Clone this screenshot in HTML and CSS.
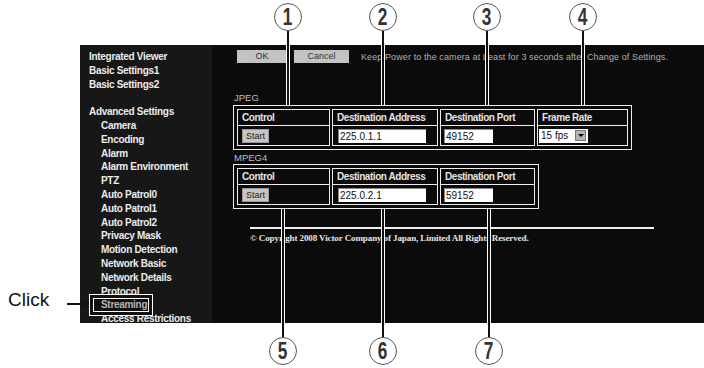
FILE: index.html
```html
<!DOCTYPE html>
<html lang="en">
<head>
    <meta charset="UTF-8">
    <meta name="viewport" content="width=device-width, initial-scale=1.0">
    <link rel="stylesheet" href="styles.css">
</head>
<body>

<div class="page">

    <div class="screen">
        <nav class="menu">
            <ul>
                <li>Integrated Viewer</li>
                <li>Basic Settings1</li>
                <li>Basic Settings2</li>
                <li class="blank"></li>
                <li>Advanced Settings</li>
                <li class="sub">Camera</li>
                <li class="sub">Encoding</li>
                <li class="sub">Alarm</li>
                <li class="sub">Alarm Environment</li>
                <li class="sub">PTZ</li>
                <li class="sub">Auto Patrol0</li>
                <li class="sub">Auto Patrol1</li>
                <li class="sub">Auto Patrol2</li>
                <li class="sub">Privacy Mask</li>
                <li class="sub">Motion Detection</li>
                <li class="sub">Network Basic</li>
                <li class="sub">Network Details</li>
                <li class="sub">Protocol</li>
                <li class="sub current"><span>Streaming</span></li>
                <li class="sub">Access Restrictions</li>
            </ul>
        </nav>

        <main class="content">
            <div class="actions">
                <button class="btn btn-ok">OK</button>
                <button class="btn btn-cancel">Cancel</button>
                <span class="note">Keep Power to the camera at Least for 3 seconds after Change of Settings.</span>
            </div>

            <div class="label">JPEG</div>
            <div class="frame">
                <div class="col col-control">
                    <div class="head">Control</div>
                    <div class="cell"><button class="start">Start</button></div>
                </div>
                <div class="col col-address">
                    <div class="head">Destination Address</div>
                    <div class="cell"><div class="field field-address">225.0.1.1</div></div>
                </div>
                <div class="col col-port">
                    <div class="head">Destination Port</div>
                    <div class="cell"><div class="field field-port">49152</div></div>
                </div>
                <div class="col col-rate">
                    <div class="head">Frame Rate</div>
                    <div class="cell">
                        <div class="select">15 fps<span class="arrow"></span></div>
                    </div>
                </div>
            </div>

            <div class="label label-mpeg">MPEG4</div>
            <div class="frame frame-mpeg">
                <div class="col col-control">
                    <div class="head">Control</div>
                    <div class="cell"><button class="start">Start</button></div>
                </div>
                <div class="col col-address">
                    <div class="head">Destination Address</div>
                    <div class="cell"><div class="field field-address">225.0.2.1</div></div>
                </div>
                <div class="col col-port">
                    <div class="head">Destination Port</div>
                    <div class="cell"><div class="field field-port">59152</div></div>
                </div>
            </div>

            <div class="rule"></div>
            <p class="copy">&copy; Copyright 2008 Victor Company of Japan, Limited All Rights Reserved.</p>
        </main>
    </div>

    <!-- annotations drawn over the screenshot -->
    <div class="click-label">Click</div>
    <div class="click-line"></div>

    <div class="callout-line" style="left: 286px; top: 31px; height: 74px;"></div>
    <div class="callout-line" style="left: 381px; top: 31px; height: 74px;"></div>
    <div class="callout-line" style="left: 485px; top: 31px; height: 74px;"></div>
    <div class="callout-line" style="left: 581px; top: 31px; height: 74px;"></div>
    <div class="callout-line" style="left: 281px; top: 209px; height: 128px;"></div>
    <div class="callout-line" style="left: 381px; top: 209px; height: 128px;"></div>
    <div class="callout-line" style="left: 487px; top: 209px; height: 128px;"></div>

    <div class="badge" style="left: 274px; top: 3px;"><span>1</span></div>
    <div class="badge" style="left: 369px; top: 3px;"><span>2</span></div>
    <div class="badge" style="left: 473px; top: 3px;"><span>3</span></div>
    <div class="badge" style="left: 569px; top: 3px;"><span>4</span></div>
    <div class="badge" style="left: 269px; top: 337px;"><span>5</span></div>
    <div class="badge" style="left: 369px; top: 337px;"><span>6</span></div>
    <div class="badge" style="left: 475px; top: 337px;"><span>7</span></div>

</div>

</body>
</html>
```

FILE: styles.css
```css
body {
    margin: 0;
    background-color: #fff;
    font-family: 'Liberation Sans', Arial, sans-serif;
}

.page {
    position: relative;
    width: 704px;
    height: 368px;
    overflow: hidden;
}

.screen {
    display: flex;
    margin: 45px 0 0 80px;
    height: 278px;
    background-color: #0b0b0b;
}

/* left menu */
.menu {
    width: 132px;
    flex: none;
    background-color: #171717;
    overflow: hidden;
}

.menu ul {
    list-style: none;
    margin: 0;
    padding: 5px 0 0 9px;
}

.menu li {
    height: 13.8px;
    line-height: 13.8px;
    font-size: 10px;
    font-weight: bold;
    letter-spacing: -0.3px;
    color: #ececec;
    white-space: nowrap;
}

.menu li.sub {
    padding-left: 12px;
}

.menu li.current {
    position: relative;
    z-index: 1;
}

.menu li.current span {
    position: relative;
    color: #b4b4b4;
}

.menu li.current::before {
    content: "";
    position: absolute;
    left: 4px;
    top: 0;
    width: 54px;
    height: 12px;
    background-color: #111;
    border: 1px solid #fff;
    box-shadow: 0 0 0 3px #111, 0 0 0 4px #fff;
}

/* main area */
.content {
    flex: 1;
    padding: 5px 0 0 21px;
}

.actions {
    display: flex;
    align-items: center;
    height: 13px;
    margin-left: 4px;
}

.btn {
    height: 13px;
    margin: 0 7px 0 0;
    padding: 0;
    border: none;
    background-color: #c3c3c3;
    color: #333;
    font-family: 'Liberation Sans', Arial, sans-serif;
    font-size: 9px;
    line-height: 13px;
}

.btn-ok {
    width: 50px;
}

.btn-cancel {
    width: 55px;
    margin-right: 12px;
}

.note {
    font-size: 9px;
    color: #b0b0b0;
    white-space: nowrap;
    letter-spacing: 0.1px;
}

.label {
    height: 11px;
    line-height: 11px;
    margin: 29px 0 2px 1px;
    font-size: 9.5px;
    color: #bdbdbd;
}

.label-mpeg {
    margin-top: 2px;
    margin-bottom: 1px;
}

.frame {
    display: inline-flex;
    gap: 2px;
    padding: 3px;
    border: 1px solid #eee;
}

.frame-mpeg {
    display: flex;
    width: max-content;
}

.col {
    border: 1px solid #eee;
}

.col-control { width: 91px; }
.col-address { width: 104px; }
.col-port { width: 93px; }
.col-rate { width: 89px; }

.head {
    height: 15px;
    line-height: 15px;
    padding-left: 4px;
    border-bottom: 1px solid #eee;
    font-size: 10px;
    font-weight: bold;
    letter-spacing: -0.45px;
    color: #e4e4e4;
    white-space: nowrap;
}

.cell {
    display: flex;
    align-items: center;
    height: 19px;
    padding-left: 4px;
}

.start {
    width: 27px;
    height: 14px;
    padding: 0;
    border: 1px solid #9a9a9a;
    background-color: #c6c6c6;
    color: #222;
    font-family: 'Liberation Sans', Arial, sans-serif;
    font-size: 9px;
    line-height: 12px;
}

.field {
    height: 14px;
    box-sizing: border-box;
    padding-left: 1px;
    background-color: #fff;
    border-top: 1px solid #888;
    border-left: 1px solid #888;
    color: #111;
    font-size: 10px;
    line-height: 13px;
}

.field-address {
    width: 88px;
    margin-left: 1px;
}

.field-port {
    width: 49px;
    margin-left: -1px;
}

.select {
    position: relative;
    width: 49px;
    height: 14px;
    margin-left: -3px;
    box-sizing: border-box;
    padding-left: 2px;
    background-color: #fff;
    color: #111;
    font-size: 10px;
    line-height: 14px;
}

.arrow {
    position: absolute;
    right: 2px;
    top: 1px;
    width: 11px;
    height: 11px;
    background-color: #b4b4b4;
    border: 1px solid #777;
    box-sizing: border-box;
}

.arrow::after {
    content: "";
    position: absolute;
    left: 2px;
    top: 3px;
    border-left: 3px solid transparent;
    border-right: 3px solid transparent;
    border-top: 3px solid #000;
}

.rule {
    width: 404px;
    height: 2px;
    margin: 18px 0 0 17px;
    background-color: #eee;
}

.copy {
    margin: 4px 0 0 17px;
    font-family: 'Liberation Serif', 'Times New Roman', serif;
    font-size: 9px;
    font-weight: bold;
    letter-spacing: -0.1px;
    line-height: 10px;
    color: #e6e6e6;
    white-space: nowrap;
}

/* annotations */
.click-label {
    position: absolute;
    left: 8px;
    top: 289px;
    font-size: 19px;
    line-height: 22px;
    color: #111;
}

.click-line {
    position: absolute;
    left: 67px;
    top: 303px;
    width: 22px;
    height: 2px;
    background-color: #111;
}

.callout-line {
    position: absolute;
    width: 2px;
    background-color: #111;
    border-left: 1px solid #fff;
    border-right: 1px solid #fff;
    z-index: 2;
}

.badge {
    position: absolute;
    width: 26px;
    height: 26px;
    border: 1.5px solid #555;
    border-radius: 50%;
    background-color: #fff;
    display: flex;
    align-items: center;
    justify-content: center;
    z-index: 3;
}

.badge span {
    display: block;
    transform: scaleX(0.72);
    font-size: 24px;
    font-weight: bold;
    line-height: 26px;
    color: #333;
}
```
